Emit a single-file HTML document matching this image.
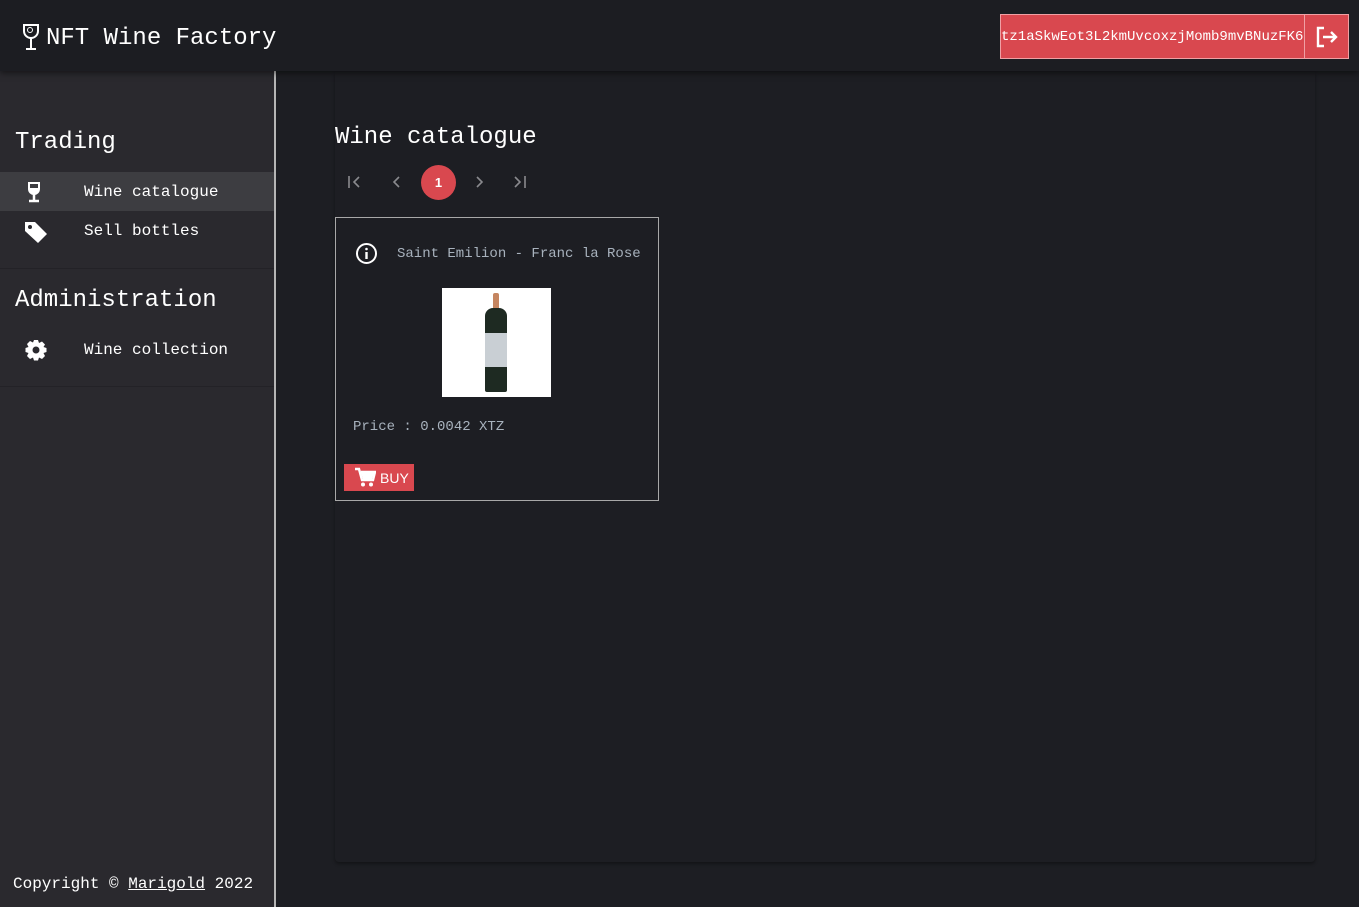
<!DOCTYPE html>
<html><head><meta charset="utf-8"><style>
*{box-sizing:border-box;margin:0;padding:0}
body{width:1359px;height:907px;overflow:hidden;background:#1d1e23;font-family:"Liberation Mono",monospace;color:#fff;position:relative}
.hdr{position:absolute;left:0;top:0;width:1359px;height:71px;background:#1c1d22;box-shadow:0 2px 6px rgba(0,0,0,.5);z-index:2}
.logo{position:absolute;left:20px;top:21px;font-size:24px;display:flex;align-items:center}
.wal{position:absolute;left:1000px;top:14px;width:349px;height:45px;background:#d9484f;border:1px solid #f0a0a4;display:flex}
.wal .a{width:303px;font-size:14px;line-height:44px;letter-spacing:0}
.wal .b{flex:1;border-left:1px solid #f0a0a4;display:flex;align-items:center;justify-content:center}
.side{position:absolute;left:0;top:71px;width:276px;height:836px;background:#2a292e;border-right:2px solid #b5b5b5}
.side h2{font-weight:normal;font-size:24px;position:absolute;left:15px}
.item{position:absolute;left:0;width:274px;height:39px;font-size:16px;line-height:39px}
.item span{position:absolute;left:84px;top:1px}
.item svg{position:absolute;left:24px;top:9px}
.sep{position:absolute;left:0;width:274px;height:1px;background:#232227}
.main{position:absolute;left:335px;top:72px;width:980px;height:790px;background:#1d1e23;box-shadow:0 2px 3px rgba(0,0,0,.35);border-radius:0 0 4px 4px}
.card{position:absolute;left:335px;top:217px;width:324px;height:284px;border:1px solid #a8a8a8}
.gray{color:#a8b2bd}
</style></head><body>
<div class="hdr">
 <div class="logo"><svg width="22" height="28" viewBox="0 0 22 28"><path d="M4 2h14v6a7 7 0 0 1-14 0z" fill="none" stroke="#fff" stroke-width="2"/><path d="M11 15v10M6 26h10" stroke="#fff" stroke-width="2"/><circle cx="10" cy="7" r="2.5" fill="none" stroke="#fff" stroke-width="1"/></svg><span style="margin-left:4px;margin-top:4px">NFT Wine Factory</span></div>
 <div class="wal"><div class="a">tz1aSkwEot3L2kmUvcoxzjMomb9mvBNuzFK6</div><div class="b"><svg width="24" height="22" viewBox="0 0 24 22"><path d="M9 2H3v18h6" fill="none" stroke="#fff" stroke-width="2.4"/><path d="M8 11h13M16 6l5 5-5 5" fill="none" stroke="#fff" stroke-width="2.4"/></svg></div></div>
</div>
<div class="side">
 <h2 style="top:58px">Trading</h2>
 <div class="item" style="top:101px;background:#3d3d41"><svg width="22" height="22" viewBox="0 0 22 22"><path d="M4 1h12v7a6 6 0 0 1-12 0z" fill="#fff"/><rect x="6" y="3" width="8" height="4" fill="#3d3d41"/><path d="M10 13v6M5 20h10" stroke="#fff" stroke-width="2.5"/></svg><span>Wine catalogue</span></div>
 <div class="item" style="top:140px"><svg width="24" height="24" viewBox="0 0 24 24"><path d="M1 2h10l12 12-9 9L1 11z" fill="#fff"/><circle cx="6" cy="7" r="2" fill="#2a292e"/></svg><span>Sell bottles</span></div>
 <div class="sep" style="top:197px"></div>
 <h2 style="top:216px">Administration</h2>
 <div class="item" style="top:259px"><svg width="24" height="24" viewBox="0 0 24 24"><path d="M10 1h4l1 3 3-1.5 3 3L19.5 8l3 1v4l-3 1 1.5 3-3 3-3-1.5-1 3h-4l-1-3-3 1.5-3-3L4.5 14l-3-1V9l3-1L3 5l3-3 3 1.5z" fill="#fff"/><circle cx="12" cy="11" r="3.5" fill="#2a292e"/></svg><span>Wine collection</span></div>
 <div class="sep" style="top:315px"></div>
 <div style="position:absolute;left:13px;top:804px;font-size:16px">Copyright © <u>Marigold</u> 2022</div>
</div>
<div class="main"></div>
<div style="position:absolute;left:335px;top:124px;font-size:24px">Wine catalogue</div>
<svg style="position:absolute;left:345px;top:174px" width="185" height="16" viewBox="0 0 185 16" fill="none" stroke="#8a8a8e" stroke-width="1.6">
 <path d="M4 2v12M14 3l-5 5 5 5"/>
 <path d="M54 3l-5 5 5 5"/>
 <path d="M132 3l5 5-5 5"/>
 <path d="M170 3l5 5-5 5M180 2v12"/>
</svg>
<div style="position:absolute;left:421px;top:165px;width:35px;height:35px;border-radius:50%;background:#d9484f;font:bold 13px 'Liberation Sans',sans-serif;text-align:center;line-height:35px">1</div>
<div class="card">
 <svg style="position:absolute;left:19px;top:24px" width="23" height="23" viewBox="0 0 23 23"><circle cx="11.5" cy="11.5" r="9.5" fill="none" stroke="#fff" stroke-width="2"/><rect x="10.3" y="10" width="2.4" height="7" fill="#fff"/><circle cx="11.5" cy="7" r="1.3" fill="#fff"/></svg>
 <div class="gray" style="position:absolute;left:61px;top:28px;font-size:14px">Saint Emilion - Franc la Rose</div>
 <div style="position:absolute;left:106px;top:70px;width:109px;height:109px;background:#fff">
  <div style="position:absolute;left:51px;top:5px;width:6px;height:18px;background:#c58560;border-radius:2px"></div>
  <div style="position:absolute;left:43px;top:20px;width:22px;height:84px;background:#1e2a22;border-radius:8px 8px 2px 2px"></div>
  <div style="position:absolute;left:43px;top:45px;width:22px;height:34px;background:#c9cfd4"></div>
 </div>
 <div class="gray" style="position:absolute;left:17px;top:201px;font-size:14px">Price : 0.0042 XTZ</div>
 <div style="position:absolute;left:8px;top:246px;width:70px;height:27px;background:#d9484f;font:14px 'Liberation Sans',sans-serif;line-height:28px">
  <svg style="position:absolute;left:10px;top:3px" width="22" height="21" viewBox="0 0 22 21"><path d="M1 2h4l3 11h11l2-8H7" fill="none" stroke="#fff" stroke-width="2.4"/><path d="M7 6h13l-2 6H9z" fill="#fff"/><circle cx="9" cy="17.5" r="2" fill="#fff"/><circle cx="17" cy="17.5" r="2" fill="#fff"/></svg>
  <span style="position:absolute;left:36px">BUY</span>
 </div>
</div>
</body></html>
